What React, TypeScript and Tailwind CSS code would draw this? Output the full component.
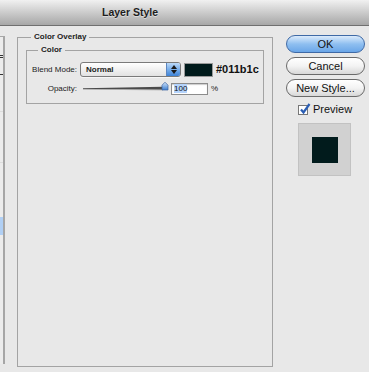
import React from "react";

const LABEL = "text-[8px] leading-none text-[#1c1c1c]";

function SelectBox() {
  return (
    <div className="ml-[3px] flex h-[15px] w-[101px] items-stretch rounded-[3px] border border-[#7a7a7a] bg-linear-to-b from-white to-[#e2e2e2] shadow-[0_1px_0_rgba(255,255,255,0.6)]">
      <span className="flex-1 pl-[5px] text-[8px] font-bold leading-[13px] text-[#1c1c1c]">Normal</span>
      <span className="flex w-[14px] flex-col items-center justify-center gap-[1px] rounded-r-[2px] border-l border-[#5c86c0] bg-linear-to-b from-[#bcd9f8] via-[#78aeea] to-[#3d82d6]">
        <svg width="6" height="4" viewBox="0 0 6 4">
          <path d="M0 4 L3 0 L6 4 Z" fill="#1a1a1a" />
        </svg>
        <svg width="6" height="4" viewBox="0 0 6 4">
          <path d="M0 0 L3 4 L6 0 Z" fill="#1a1a1a" />
        </svg>
      </span>
    </div>
  );
}

function Slider() {
  return (
    <svg width="86" height="13" viewBox="0 0 86 13" className="ml-[6px]">
      <defs>
        <linearGradient id="knob" x1="0" y1="0" x2="0" y2="1">
          <stop offset="0" stopColor="#cfe4fb" />
          <stop offset="1" stopColor="#3f7fd0" />
        </linearGradient>
      </defs>
      <path d="M0 6.3 L80 4.8 L80 7.8 L0 7.2 Z" fill="#4a4a4a" />
      <path d="M0 7.2 L80 7.8 L80 8.4 L0 7.6 Z" fill="#bdbdbd" />
      <path d="M79 3.2 L82 0.2 L85 3.2 L85 8 L79 8 Z" fill="url(#knob)" stroke="#3a62a0" strokeWidth="0.7" />
    </svg>
  );
}

function PushButton({ label, primary }: { label: string; primary?: boolean }) {
  return (
    <button
      type="button"
      className={`flex h-[18px] w-[79px] items-center justify-center rounded-full border text-[11px] leading-none text-[#111] ${
        primary
          ? "border-[#3f6aa6] bg-linear-to-b from-[#dcebfb] via-[#8fbff0] to-[#6aa6e8]"
          : "border-[#6a6a6a] bg-linear-to-b from-white via-[#f3f3f3] to-[#d8d8d8]"
      }`}
    >
      {label}
    </button>
  );
}

export default function App() {
  return (
    <div className="h-[372px] w-[369px] overflow-hidden bg-[#e8e8e8] font-['Liberation_Sans',Arial,sans-serif]">
      {/* title bar */}
      <div className="flex h-[26px] items-center border-b border-[#6f6f6f] bg-linear-to-b from-[#f1f1f1] to-[#a7a7a7] pl-[102px]">
        <span className="text-[10.5px] font-bold text-[#1d1d1d] [text-shadow:0_1px_0_rgba(255,255,255,0.45)]">
          Layer Style
        </span>
      </div>

      <div className="flex">
        {/* styles list, cut off at the left */}
        <div className="mt-[10px] flex h-[328px] w-[5px] flex-col border-t border-r-2 border-[#a6a6a6] bg-[#ececec]">
          <div className="h-[18px]" />
          <div className="h-px w-[3px] bg-[#333]" />
          <div className="h-px" />
          <div className="h-px w-[3px] bg-[#333]" />
          <div className="h-[16px]" />
          <div className="h-px w-[3px] bg-[#333]" />
          <div className="h-[36px]" />
          <div className="h-px bg-[#dcdcdc]" />
          <div className="h-[50px]" />
          <div className="h-px bg-[#dcdcdc]" />
          <div className="h-[54px]" />
          <div className="h-[18px] bg-[#b0cff4]" />
        </div>

        {/* Color Overlay panel */}
        <fieldset className="ml-[12px] mt-[6px] h-[335px] w-[255px] border border-[#a3a3a3]">
          <legend className="ml-[13px] px-[3px] text-[8px] font-bold leading-[10px] text-[#1c1c1c]">
            Color Overlay
          </legend>
          <div className="px-[8px] pt-[3px]">
            <fieldset className="h-[59px] w-[238px] border border-[#a3a3a3]">
              <legend className="ml-[11px] px-[3px] text-[8px] font-bold leading-[10px] text-[#1c1c1c]">
                Color
              </legend>
              <div className="flex flex-col pt-[7px]">
                <div className="flex h-[15px] items-center">
                  <span className={`${LABEL} w-[50px] text-right`}>Blend Mode:</span>
                  <SelectBox />
                  <span className="ml-[3px] h-[14px] w-[29px] border border-[#9a9a9a] bg-[#011b1c]" />
                  <span className="ml-[3px] text-[11px] font-bold leading-none text-[#111]">#011b1c</span>
                </div>
                <div className="mt-[5px] flex h-[13px] items-center">
                  <span className={`${LABEL} w-[50px] text-right`}>Opacity:</span>
                  <Slider />
                  <span className="ml-[2px] flex h-[12px] w-[37px] items-center border border-[#8c8c8c] bg-white pl-[2px] shadow-[inset_0_1px_1px_rgba(0,0,0,0.2)]">
                    <span className="bg-[#b4d3fb] text-[8px] leading-[9px] text-[#111]">100</span>
                  </span>
                  <span className={`${LABEL} ml-[3px]`}>%</span>
                </div>
              </div>
            </fieldset>
          </div>
        </fieldset>

        {/* buttons */}
        <div className="ml-[13px] mt-[9px] flex w-[79px] flex-col">
          <PushButton label="OK" primary />
          <div className="mt-[4px]">
            <PushButton label="Cancel" />
          </div>
          <div className="mt-[4px]">
            <PushButton label="New Style..." />
          </div>
          <label className="mt-[6px] flex h-[13px] items-center pl-[12px]">
            <span className="relative h-[10px] w-[10px] border border-[#777] bg-white">
              <svg width="12" height="12" viewBox="0 0 12 12" className="absolute -top-[3px] left-0">
                <path d="M2 6.5 L4.5 9.5 L10.5 1" fill="none" stroke="#2a5db3" strokeWidth="2.2" />
              </svg>
            </span>
            <span className="ml-[5px] text-[11px] leading-none text-[#111]">Preview</span>
          </label>
          <div className="ml-[12px] mt-[7px] flex h-[53px] w-[53px] items-center justify-center border border-[#c2c2c2] bg-[#d1d1d1]">
            <div className="h-[26px] w-[26px] bg-[#011b1c]" />
          </div>
        </div>
      </div>
    </div>
  );
}
